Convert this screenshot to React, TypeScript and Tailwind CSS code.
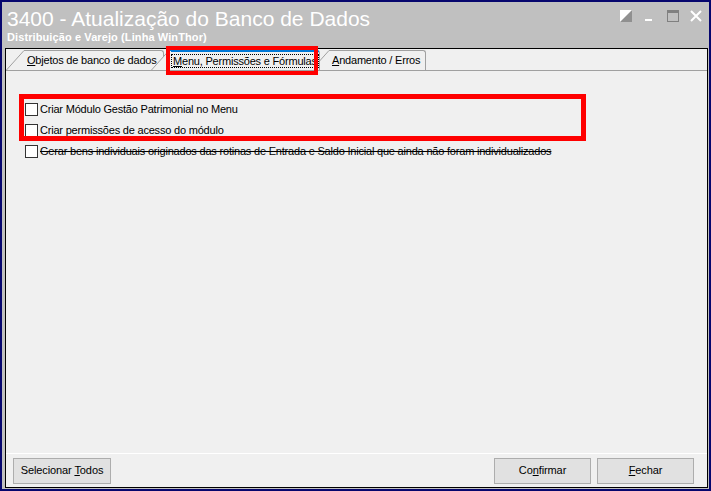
import React from 'react';

const ui = { fontFamily: '"Liberation Sans", Arial, sans-serif' };

function Checkbox({ label, strike }: { label: string; strike?: boolean }) {
    return (
        <label className="flex items-center h-[13px] gap-[2px] text-[11px] tracking-[-0.2px] text-black whitespace-nowrap">
            <span className="w-[13px] h-[13px] border border-[#333] bg-white shrink-0" />
            <span className={strike ? 'line-through' : ''}>{label}</span>
        </label>
    );
}

function Tab({ children, active, className }: { children: React.ReactNode; active?: boolean; className: string }) {
    return (
        <div className={`relative flex h-[21px] items-end ${active ? 'z-10' : ''} ${className}`}>
            {/* slanted left edge */}
            <svg className="absolute left-0 bottom-0" width="20" height="21" viewBox="0 0 20 21">
                <path d="M0 21 L18 2 L20 2 L20 21 Z" fill="#f0f0f0" />
                <path d="M0.5 21 L18 1.5" stroke="#a0a0a0" fill="none" />
            </svg>
            <div
                className={`ml-[18px] flex-1 h-[20px] border-t border-r border-[#a0a0a0] bg-[#f0f0f0] rounded-tr-[3px] flex items-center pl-[2px] text-[11px] tracking-[-0.2px] text-black whitespace-nowrap ${
                    active ? 'border-t-2 border-t-[#0078d7]' : ''
                }`}
            >
                {children}
            </div>
        </div>
    );
}

export default function App() {
    return (
        <div className="w-[711px] h-[491px] bg-[#06066e] p-[2px]" style={ui}>
            <div className="h-full flex flex-col bg-[#c0c0c0] pl-[3px] pr-[1px] pb-[1px]">
                {/* Title bar */}
                <div className="relative h-[46px] pl-[2px] pt-[4px] text-white whitespace-nowrap">
                    <div className="text-[21px] leading-[25px]">3400 - Atualização do Banco de Dados</div>
                    <div className="text-[11px] font-bold leading-[13px] tracking-[0.1px]">Distribuição e Varejo (Linha WinThor)</div>
                    <div className="absolute right-[6px] top-[8px] flex items-center gap-[11px]">
                        <svg width="12" height="12" viewBox="0 0 12 12">
                            <rect x="0" y="0" width="12" height="12" fill="#ffffff" />
                            <path d="M12 0 L12 12 L0 12 Z" fill="#909090" />
                        </svg>
                        <svg width="12" height="12" viewBox="0 0 12 12" className="ml-[1px]">
                            <rect x="1" y="9" width="7" height="2" fill="#ffffff" />
                        </svg>
                        <svg width="12" height="12" viewBox="0 0 12 12">
                            <rect x="0.5" y="0.5" width="11" height="11" fill="none" stroke="#808080" />
                            <rect x="0" y="0" width="12" height="3" fill="#808080" />
                        </svg>
                        <svg width="12" height="12" viewBox="0 0 12 12">
                            <path d="M1 1 L11 11 M11 1 L1 11" stroke="#ffffff" strokeWidth="2" />
                        </svg>
                    </div>
                </div>

                {/* Form body */}
                <div className="relative flex-1 flex flex-col border border-black bg-[#f0f0f0]">
                    <div className="flex h-[22px] items-end border-b border-[#a0a0a0]">
                        <Tab className="w-[158px]">
                            <span className="pl-[1px]"><u>O</u>bjetos de banco de dados</span>
                        </Tab>
                        <Tab active className="w-[164px] -ml-[13px]">
                            <span className="border border-dotted border-black px-[1px] leading-[12px]">
                                <u>M</u>enu, Permissões e Fórmulas
                            </span>
                        </Tab>
                        <Tab className="w-[115px] -ml-[4px]">
                            <span className="pl-[1px]"><u>A</u>ndamento / Erros</span>
                        </Tab>
                    </div>

                    <div className="flex-1 flex flex-col gap-[8px] pl-[19px] pt-[32px] border-b border-white">
                        <Checkbox label="Criar Módulo Gestão Patrimonial no Menu" />
                        <Checkbox label="Criar permissões de acesso do módulo" />
                        <Checkbox strike label="Gerar bens individuais originados das rotinas de Entrada e Saldo Inicial que ainda não foram individualizados" />
                    </div>

                    <div className="h-[33px] flex items-center px-[7px] text-[11px] tracking-[-0.1px] text-black">
                        <button className="w-[98px] h-[26px] bg-[#e1e1e1] border border-[#adadad]">
                            Selecionar <u>T</u>odos
                        </button>
                        <div className="flex-1" />
                        <button className="w-[97px] h-[26px] bg-[#e1e1e1] border border-[#adadad]">
                            Co<u>n</u>firmar
                        </button>
                        <button className="ml-[6px] mr-[6px] w-[97px] h-[26px] bg-[#e1e1e1] border border-[#adadad]">
                            <u>F</u>echar
                        </button>
                    </div>

                    {/* highlight boxes */}
                    <div className="absolute z-20 left-[160px] top-[-3px] w-[152px] h-[29px] border-[4px] border-[#ff0000]" />
                    <div className="absolute z-20 left-[13px] top-[45px] w-[567px] h-[47px] border-[5px] border-[#ff0000]" />
                </div>
            </div>
        </div>
    );
}
